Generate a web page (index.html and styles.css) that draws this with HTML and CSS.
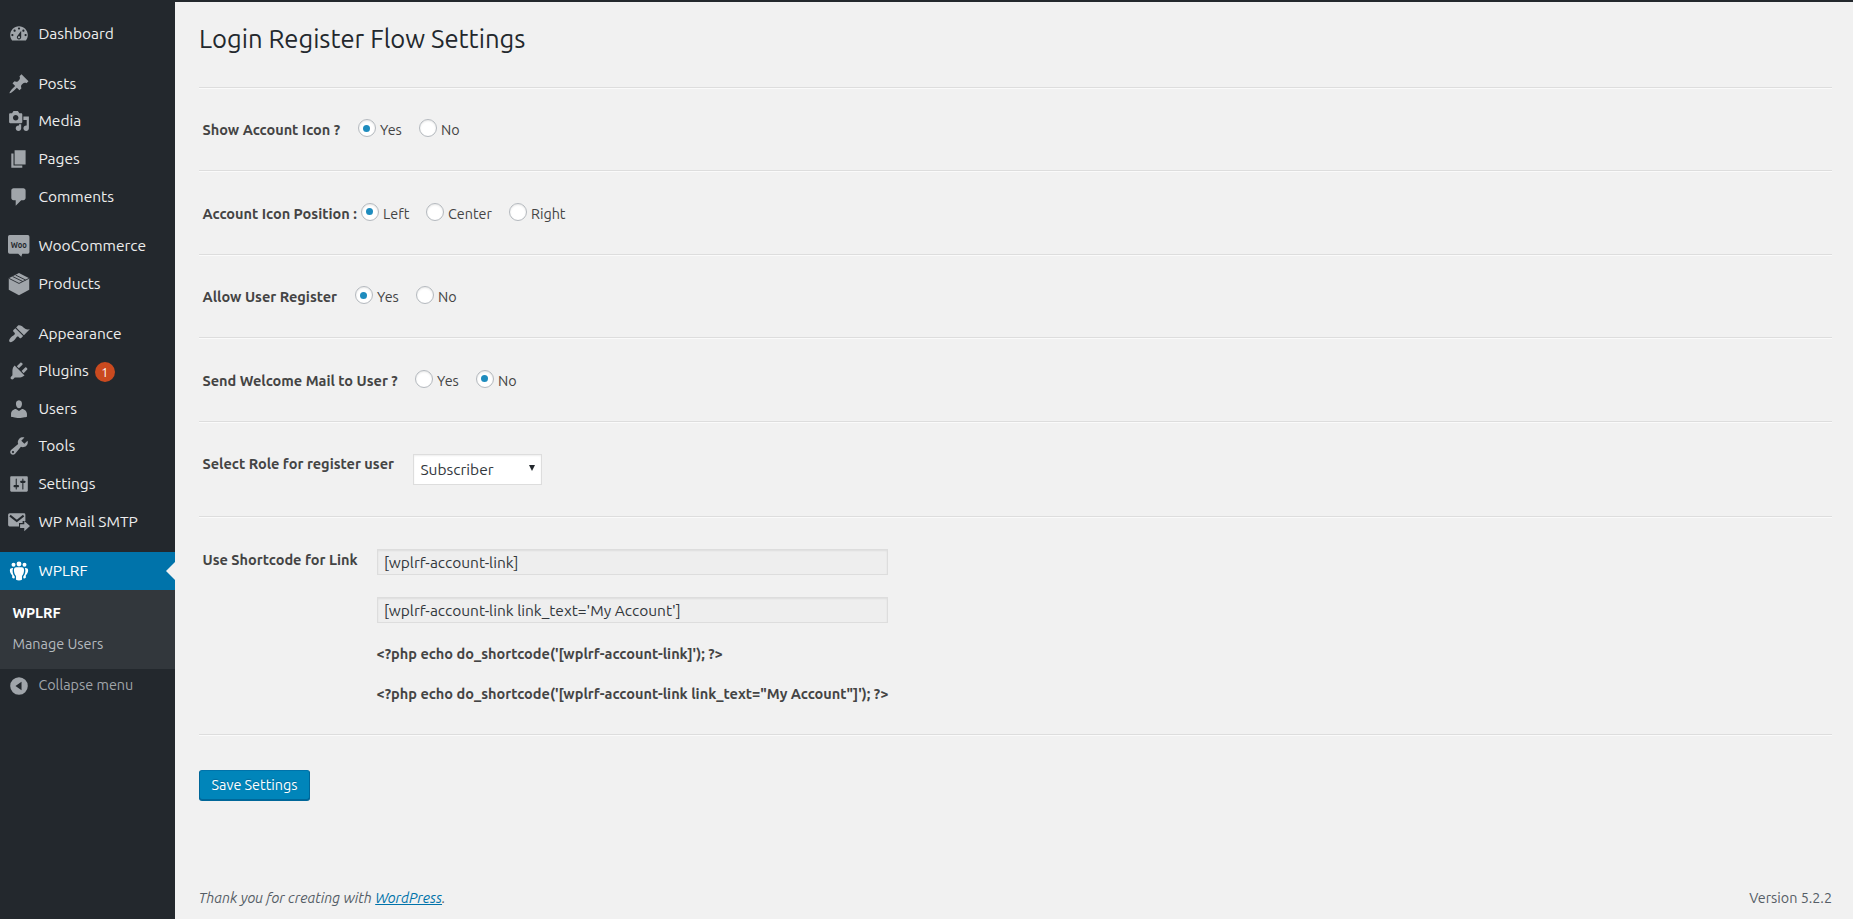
FILE: index.html
```html
<!DOCTYPE html>
<html lang="en">
<head>
<meta charset="utf-8">
<title>Login Register Flow Settings</title>
<link rel="stylesheet" href="styles.css">
</head>
<body>
<div class="topbar"></div>
<div class="layout">
<nav class="sidebar">
  <a class="item"><svg class="icon" viewBox="0 0 20 20"><path fill-rule="evenodd" d="M3.76 16h12.48c1.1-1.37 1.76-3.11 1.76-5 0-4.42-3.58-8-8-8s-8 3.58-8 8c0 1.89.66 3.63 1.76 5zM10 4c.55 0 1 .45 1 1s-.45 1-1 1-1-.45-1-1 .45-1 1-1zM6 6c.55 0 1 .45 1 1s-.45 1-1 1-1-.45-1-1 .45-1 1-1zm8 0c.55 0 1 .45 1 1s-.45 1-1 1-1-.45-1-1 .45-1 1-1zm-5.37 5.55L12 7v6c0 1.1-.9 2-2 2s-2-.9-2-2c0-.57.24-1.08.63-1.45zM4 10c.55 0 1 .45 1 1s-.45 1-1 1-1-.45-1-1 .45-1 1-1zm12 0c.55 0 1 .45 1 1s-.45 1-1 1-1-.45-1-1 .45-1 1-1zm-5 3c0-.55-.45-1-1-1s-1 .45-1 1 .45 1 1 1 1-.45 1-1z"/></svg><span>Dashboard</span></a>
  <div class="sep"></div>
  <a class="item"><svg class="icon" viewBox="0 0 20 20"><path d="M10.44 3.02l1.82-1.82 6.36 6.35-1.83 1.82c-1.05-.68-2.48-.57-3.41.36l-.75.75c-.92.93-1.04 2.35-.35 3.41l-1.83 1.82-2.41-2.41-2.8 2.79c-.42.42-3.38 2.71-3.8 2.29s1.86-3.39 2.28-3.81l2.79-2.79L4.1 9.36l1.83-1.82c1.05.69 2.48.57 3.4-.36l.75-.75c.93-.92 1.05-2.35.36-3.41z"/></svg><span>Posts</span></a>
  <a class="item"><svg class="icon" viewBox="0 0 20 20"><path fill-rule="evenodd" d="M13 11V4c0-.55-.45-1-1-1h-1.67L9 1H5L3.67 3H2c-.55 0-1 .45-1 1v7c0 .55.45 1 1 1h10c.55 0 1-.45 1-1zM7 4.5c1.38 0 2.5 1.12 2.5 2.5S8.38 9.5 7 9.5 4.5 8.38 4.5 7 5.62 4.5 7 4.5zM14 6h5v10.5c0 1.38-1.12 2.5-2.5 2.5S14 17.88 14 16.5s1.12-2.5 2.5-2.5c.17 0 .34.02.5.05V9h-3V6zm-4 8.05V13h2v3.5c0 1.38-1.12 2.5-2.5 2.5S7 17.88 7 16.5 8.12 14 9.5 14c.17 0 .34.02.5.05z"/></svg><span>Media</span></a>
  <a class="item"><svg class="icon" viewBox="0 0 20 20"><path d="M6 15V2h10v13H6zm-1 1h8v2H3V5h2v11z"/></svg><span>Pages</span></a>
  <a class="item"><svg class="icon" viewBox="0 0 20 20"><path d="M5 2h9c1.100 0 2 .9 2 2v7c0 1.100-.9 2-2 2h-2l-5 5v-5H5c-1.100 0-2-.9-2-2V4c0-1.100.9-2 2-2z"/></svg><span>Comments</span></a>
  <div class="sep"></div>
  <a class="item"><svg class="icon" viewBox="0 0 20 20"><path d="M1.500 0h16.500a1.500 1.500 0 0 1 1.500 1.500v14a1.500 1.500 0 0 1-1.500 1.500h-5l-.9 2.800-2.800-2.800H1.500A1.500 1.500 0 0 1 0 15.500V1.500A1.500 1.500 0 0 1 1.500 0z"/><text class="woo" x="9.800" y="12" textLength="14.500" lengthAdjust="spacingAndGlyphs">Woo</text></svg><span>WooCommerce</span></a>
  <a class="item"><svg class="icon" viewBox="0 0 20 20"><path d="M10 0l9.300 4.700V15.300L10 20.200.7 15.300V4.700z"/><path class="cut" d="M.9 4.900L10 9.500l9.100-4.600M4.200 3.200l9.200 4.500M6.900 1.900l9.200 4.500"/></svg><span>Products</span></a>
  <div class="sep"></div>
  <a class="item"><svg class="icon" viewBox="0 0 20 20"><path d="M14.480 11.060L7.410 3.990l1.500-1.500c.5-.56 2.300-.47 3.510.32 1.210.8 1.430 1.280 2.910 2.100 1.180.64 2.450 1.260 4.450.85zm-.71.71L6.700 4.700 4.930 6.470c-.39.39-.39 1.020 0 1.410l1.060 1.060c.39.39.39 1.030 0 1.420-.6.6-1.430 1.110-2.210 1.690-.35.26-.7.53-1.010.84C1.430 14.230.4 16.080 1.400 17.070c.99 1 2.840-.03 4.180-1.360.31-.31.58-.66.85-1.020.57-.78 1.080-1.610 1.690-2.210.39-.39 1.020-.39 1.410 0l1.060 1.060c.39.39 1.020.39 1.410 0z"/></svg><span>Appearance</span></a>
  <a class="item"><svg class="icon" viewBox="0 0 20 20"><path d="M13.110 4.360L9.870 7.600 8 5.730l3.240-3.240c.35-.34 1.050-.2 1.560.32.52.51.66 1.210.31 1.550zm-8 1.770l.91-1.120 9.010 9.010-1.190.84c-.71.71-2.630 1.160-3.820 1.160H6.140L4.900 17.260c-.59.59-1.540.59-2.120 0-.59-.58-.59-1.530 0-2.120l1.240-1.240v-3.880c0-1.130.4-3.190 1.090-3.890zm7.260 3.970l3.240-3.240c.34-.35 1.040-.21 1.550.31.52.51.66 1.210.31 1.550l-3.240 3.250z"/></svg><span>Plugins</span><b class="count">1</b></a>
  <a class="item"><svg class="icon" viewBox="0 0 20 20"><path d="M10 9.250c-2.270 0-2.730-3.440-2.730-3.440C7 4.020 7.820 2 9.970 2c2.160 0 2.980 2.020 2.710 3.810 0 0-.41 3.440-2.680 3.440zm0 2.570L12.720 10c2.390 0 4.520 2.330 4.520 4.530v2.490s-3.650 1.130-7.240 1.130c-3.650 0-7.240-1.130-7.240-1.130v-2.490c0-2.250 1.940-4.480 4.470-4.480z"/></svg><span>Users</span></a>
  <a class="item"><svg class="icon" viewBox="0 0 20 20"><path fill-rule="evenodd" d="M16.680 9.770c-1.340 1.340-3.300 1.670-4.950.99l-5.410 6.520c-.99.99-2.590.99-3.580 0s-.99-2.590 0-3.570l6.520-5.420c-.68-1.650-.35-3.610.99-4.950 1.280-1.280 3.120-1.620 4.720-1.060l-2.890 2.890 2.820 2.820 2.860-2.870c.53 1.580.18 3.390-1.080 4.650zM3.810 16.210c.4.39 1.040.39 1.430 0 .4-.4.4-1.040 0-1.430-.39-.4-1.030-.4-1.430 0-.39.39-.39 1.030 0 1.430z"/></svg><span>Tools</span></a>
  <a class="item"><svg class="icon" viewBox="0 0 20 20"><path fill-rule="evenodd" d="M18 16V4c0-.55-.45-1-1-1H3c-.55 0-1 .45-1 1v12c0 .55.45 1 1 1h14c.55 0 1-.45 1-1zM8 11h1c.55 0 1 .45 1 1s-.45 1-1 1H8v1.500c0 .28-.22.5-.5.5s-.5-.22-.5-.5V13H6c-.55 0-1-.45-1-1s.45-1 1-1h1V5.500c0-.28.22-.5.5-.5s.5.22.5.5V11zm5-2h-1c-.55 0-1-.45-1-1s.45-1 1-1h1V5.500c0-.28.22-.5.5-.5s.5.22.5.5V7h1c.55 0 1 .45 1 1s-.45 1-1 1h-1v5.500c0 .28-.22.5-.5.5s-.5-.22-.5-.5V9z"/></svg><span>Settings</span></a>
  <a class="item"><svg class="icon" viewBox="0 0 20 20"><path d="M1.500 2h13A1.300 1.300 0 0 1 15.800 3.300V9h-2.500v2H10v3H1.500A1.400 1.400 0 0 1 .1 12.600V3.400A1.400 1.400 0 0 1 1.500 2z"/><path class="cut thick" d="M1.800 4.200l6.200 4.900 6.200-4.900"/><path d="M11 12h3.800V9l5.200 4.700-5.200 4.800v-3H11z"/></svg><span>WP Mail SMTP</span></a>
  <div class="sep"></div>
  <a class="item current"><svg class="icon" viewBox="0 0 20 20"><circle cx="10" cy="3.600" r="2.200"/><circle cx="5" cy="4.400" r="1.800"/><circle cx="15" cy="4.400" r="1.800"/><path d="M7.500 6.700h5c1.500 0 2.100 1.200 2.100 2.500 0 2.600-.9 4.500-1.900 5.300v3.400c-1.500 1-3.900 1-5.400 0v-3.400c-1-.8-1.900-2.700-1.900-5.300 0-1.300.6-2.500 2.100-2.500z"/><path d="M4.600 7.200c-.9 2.600-.3 6 1.500 7.700v1.700c-1 .3-1.600.1-2.300-.5v-2.300C2.500 12.800 1.700 11 1.700 9.300c0-1.500 1-2.200 2.900-2.100zM15.400 7.200c.9 2.600.3 6-1.500 7.700v1.700c1 .3 1.600.1 2.300-.5v-2.300c1.300-1 2.100-2.800 2.100-4.500 0-1.500-1-2.200-2.900-2.100z"/></svg><span>WPLRF</span></a>
  <div class="submenu"><a class="active">WPLRF</a><a>Manage Users</a></div>
  <a class="item collapse"><svg class="icon" viewBox="0 0 20 20"><path fill-rule="evenodd" d="M10 2a8 8 0 1 1 0 16 8 8 0 0 1 0-16zM12.300 6.200L6.800 10l5.500 3.800z"/></svg><span>Collapse menu</span></a>
</nav>
<main class="content">
  <h1>Login Register Flow Settings</h1>
  <section class="row">
    <b class="label show">Show Account Icon ?</b>
    <label class="opt"><i class="radio on"></i>Yes</label><label class="opt"><i class="radio"></i>No</label>
  </section>
  <section class="row">
    <b class="label position">Account Icon Position :</b>
    <label class="opt left"><i class="radio on"></i>Left</label><label class="opt center"><i class="radio"></i>Center</label><label class="opt"><i class="radio"></i>Right</label>
  </section>
  <section class="row">
    <b class="label allow">Allow User Register</b>
    <label class="opt"><i class="radio on"></i>Yes</label><label class="opt"><i class="radio"></i>No</label>
  </section>
  <section class="row">
    <b class="label mail">Send Welcome Mail to User ?</b>
    <label class="opt"><i class="radio"></i>Yes</label><label class="opt"><i class="radio on"></i>No</label>
  </section>
  <section class="row role-row">
    <b class="label role">Select Role for register user</b>
    <div class="select"><span>Subscriber</span><svg class="caret" viewBox="0 0 6 6"><path d="M0 0h6L3 6z"/></svg></div>
  </section>
  <section class="row code-row">
    <b class="label code">Use Shortcode for Link</b>
    <div class="codes">
      <div class="field">[wplrf-account-link]</div>
      <div class="field">[wplrf-account-link link_text='My Account']</div>
      <b class="php">&lt;?php echo do_shortcode('[wplrf-account-link]'); ?&gt;</b>
      <b class="php">&lt;?php echo do_shortcode('[wplrf-account-link link_text="My Account"]'); ?&gt;</b>
    </div>
  </section>
  <section class="actions"><button class="save">Save Settings</button></section>
  <footer class="footer"><em>Thank you for creating with <a>WordPress</a>.</em><span class="version">Version 5.2.2</span></footer>
</main>
</div>
</body>
</html>
```

FILE: styles.css
```css
* { box-sizing: border-box; }
body {
  margin: 0;
  height: 919px;
  overflow: hidden;
  background: #f1f1f1;
  color: #444;
  font-family: Ubuntu, "Noto Sans", "Open Sans", sans-serif;
  font-size: 14.35px;
}
.topbar { height: 2px; background: #23282d; }
.layout { display: flex; height: 917px; }

/* Admin menu */
.sidebar { width: 175px; flex: none; background: #23282d; padding-top: 13.3px; }
.item {
  display: flex;
  align-items: center;
  height: 37.6px;
  padding-left: 8px;
  color: #eee;
  font-size: 15.5px;
  line-height: 20px;
  white-space: nowrap;
}
.icon { width: 22px; height: 22px; margin-right: 8.4px; fill: #a0a5aa; flex: none; overflow: visible; }
.cut { fill: none; stroke: #23282d; stroke-width: .8; }
.thick { stroke-width: 1.8; }
.woo { fill: #23282d; font: bold 8.5px Ubuntu, "Noto Sans", sans-serif; text-anchor: middle; }
.sep { height: 12.1px; }
.count {
  width: 20px; height: 20px; margin: 1px 0 0 6px;
  border-radius: 10px; background: #ca4a1f; color: #fff;
  font-size: 12.5px; font-weight: 400; line-height: 20px; text-align: center;
}
.current { position: relative; background: #0073aa; color: #fff; }
.current .icon { fill: #fff; }
.current::after {
  content: ""; position: absolute; right: 0; top: 10px;
  border: 9px solid transparent; border-left: 0; border-right-color: #f1f1f1;
}
.submenu { display: flex; flex-direction: column; height: 79px; padding: 8px 0 0 12.4px; background: #32373c; }
.submenu a { height: 31px; line-height: 30px; color: #b4b9be; font-size: 14.4px; }
.submenu .active { color: #fff; font-weight: 700; }
.collapse { height: 34px; color: #a0a5aa; font-size: 14.4px; }
.collapse span { margin-top: -2px; }
.collapse .icon { margin-top: 1px; }

/* Settings page */
.content { flex: 1; display: flex; flex-direction: column; padding: 0 21px 0 24px; }
h1 { height: 85px; margin: 0; padding: 19px 0 0; color: #23282d; font-size: 25.6px; font-weight: 400; line-height: 36px; }
.row { display: flex; height: 83.4px; padding: 32.4px 0 0 3.5px; border-top: 1px solid #ddd; box-shadow: inset 0 1px 0 #fafafa; line-height: 20px; }
.label { flex: none; white-space: nowrap; }
.label, .php { font-size: 14.52px; }
.show { width: 155px; }
.position { width: 158px; }
.allow { width: 152px; }
.mail { width: 212px; }
.role { width: 210px; }
.code { width: 174px; padding-top: 1px; }
.opt { display: flex; width: 61px; white-space: nowrap; }
.opt.left { width: 65px; }
.opt.center { width: 83px; }
.radio {
  display: flex; align-items: center; justify-content: center; flex: none;
  width: 18px; height: 18px; margin: -1px 4.5px 0 0;
  border: 1px solid #b4b9be; border-radius: 50%; background: #fff;
  box-shadow: inset 0 1px 2px rgba(0,0,0,.1);
}
.radio.on::before { content: ""; width: 7px; height: 7px; border-radius: 50%; background: #1e8cbe; }
.role-row { height: 95.4px; }
.select {
  display: flex; align-items: center; justify-content: space-between;
  width: 129px; height: 31px; padding: 1px 6px 0 7px;
  border: 1px solid #ddd; background: #fff; color: #32373c; font-size: 15.5px;
  box-shadow: inset 0 1px 2px rgba(0,0,0,.07);
}
.caret { width: 6px; height: 6px; fill: #23282d; margin-top: -3px; }
.code-row { height: 218px; }
.codes { width: 511px; }
.field {
  height: 26px; margin-bottom: 22px; padding: 0 6.4px; border: 1px solid #ddd;
  background: #eee; color: #32373c; font-size: 15.5px; line-height: 25px;
  box-shadow: inset 0 1px 2px rgba(0,0,0,.07); white-space: nowrap;
}
.php { display: block; height: 40px; margin-top: -1px; white-space: nowrap; }
.php + .php { margin-top: 0; }
.actions { padding-top: 35px; border-top: 1px solid #ddd; box-shadow: inset 0 1px 0 #fafafa; }
.save {
  display: block; width: 111px; height: 30px; padding: 0;
  border: 1px solid #006799; border-color: #0073aa #006799 #006799; border-radius: 3px;
  background: #0085ba; box-shadow: 0 1px 0 #006799; color: #fff;
  font: inherit; line-height: 26px; text-shadow: 0 -1px 1px #006799;
}
.footer { display: flex; justify-content: space-between; margin: auto 0 0 -.6px; height: 31px; color: #555d66; line-height: 20px; }
.footer a { color: #0073aa; text-decoration: underline; }
```
